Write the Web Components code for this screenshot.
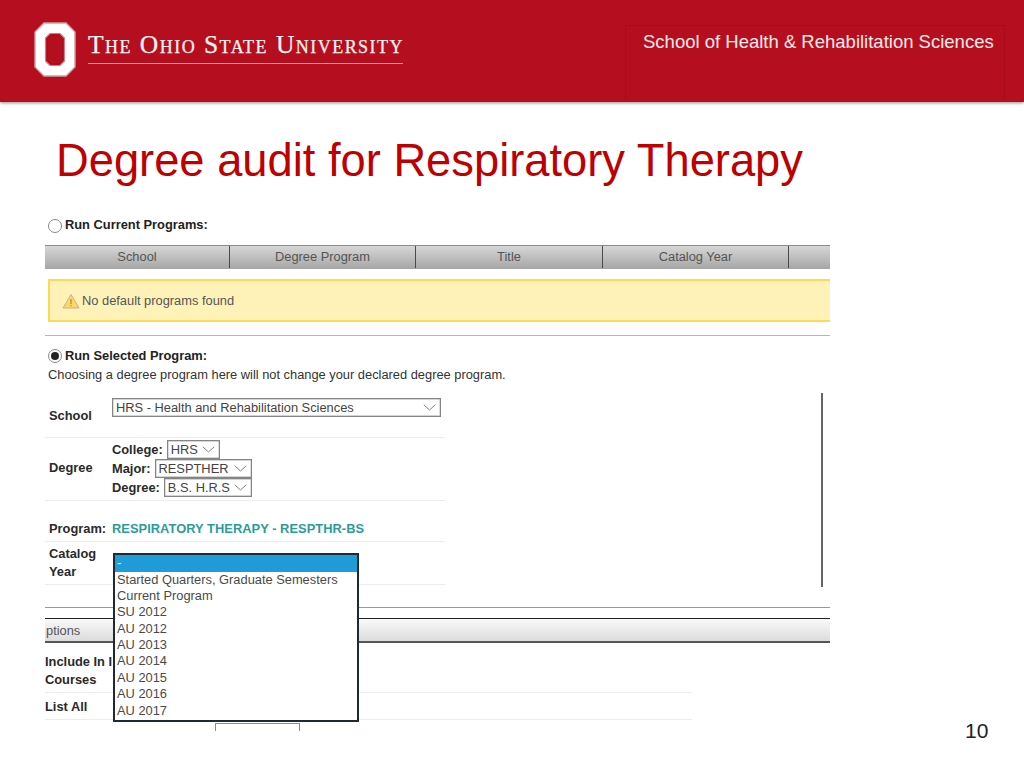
<!DOCTYPE html>
<html lang="en">
<head>
<meta charset="utf-8">
<title>Degree audit for Respiratory Therapy</title>
<style>
  html, body { margin: 0; background: #fff; }
  body { width: 1024px; height: 768px; overflow: hidden; position: relative; font-family: "Liberation Sans", Arial, sans-serif; }
  .page-no { position: absolute; left: 965px; top: 719px; font-size: 21px; line-height: 24px; color: #222; }
</style>
</head>
<body>
<slide-header school="School of Health &amp; Rehabilitation Sciences"></slide-header>
<slide-title>Degree audit for Respiratory Therapy</slide-title>
<audit-panel></audit-panel>
<div class="page-no">10</div>

<script>
const fontStack = '"Liberation Sans", Arial, sans-serif'

customElements.define('osu-logo',
  class extends HTMLElement {
    constructor () {
      super()
      this.attachShadow({ mode: 'open' }).innerHTML = `
        <style>:host { display: block; width: 42px; height: 55px; } svg { display: block; }</style>
        <svg width="42" height="55" viewBox="0 0 42 55">
          <path d="M10 1H32L41 10V45L32 54H10L1 45V10Z" fill="#fff" stroke="#cfa0a6" stroke-width="1.400"/>
          <path d="M16 11.500H26L30.500 16V39L26 43.500H16L11.500 39V16Z" fill="#b50f1f" stroke="#cf7d86" stroke-width="1.200"/>
          <path d="M17 13.500H25L28.500 17V38L25 41.500H17L13.500 38V17Z" fill="#b50f1f" stroke="#a80c1b" stroke-width=".8"/>
        </svg>`
    }
  }
)

customElements.define('slide-header',
  class extends HTMLElement {
    constructor () {
      super()
      this.attachShadow({ mode: 'open' }).innerHTML = `
        <style>
          :host { display: flex; height: 102px; background: #b50f1f; box-shadow: 0 1px 3px rgba(0,0,0,.45); box-sizing: border-box; padding: 22px 19px 0 34px; position: relative; }
          .mark { margin-left: 12px; width: 315px; height: 41px; border-bottom: 1px solid #e39aa1; }
          .mark span { display: block; padding-top: 10px; font: 500 25.500px/26px "Liberation Serif", serif; font-variant: small-caps; letter-spacing: 1.470px; -webkit-text-stroke: .25px #fdf3f3; color: #fdf3f3; white-space: nowrap; }
          .school { margin-left: auto; width: 380px; height: 75px; margin-top: 3px; box-sizing: border-box; border: 1px solid #a80c1b; border-bottom: 0; padding: 6px 0 0 17px; color: #fbeaea; font: 18.500px/20px ${fontStack}; white-space: nowrap; }
        </style>
        <osu-logo></osu-logo>
        <div class="mark"><span>The Ohio State University</span></div>
        <div class="school"></div>`
      this.shadowRoot.querySelector('.school').textContent = this.getAttribute('school')
    }
  }
)

customElements.define('slide-title',
  class extends HTMLElement {
    constructor () {
      super()
      this.attachShadow({ mode: 'open' }).innerHTML = `
        <style>:host { display: block; height: 113px; box-sizing: border-box; padding: 32px 0 0 56px; font: 45.300px/54px ${fontStack}; color: #bd0000; white-space: nowrap; }</style>
        <slot></slot>`
    }
  }
)

customElements.define('radio-label',
  class extends HTMLElement {
    constructor () {
      super()
      const on = this.hasAttribute('checked')
      this.attachShadow({ mode: 'open' }).innerHTML = `
        <style>
          :host { display: flex; align-items: center; height: 18px; padding-left: 3px; font: bold 12.850px/18px ${fontStack}; color: #222; }
          i { display: block; box-sizing: border-box; width: 14px; height: 14px; border: 1px solid #8a8a8a; border-radius: 50%; margin-right: 3px; background: #fff; position: relative; top: ${on ? 0 : 1}px; }
          i.on::after { content: ""; position: absolute; inset: 2px; border-radius: 50%; background: #222; }
        </style>
        <i class="${on ? 'on' : ''}"></i><slot></slot>`
    }
  }
)

customElements.define('grid-header',
  class extends HTMLElement {
    constructor () {
      super()
      this.attachShadow({ mode: 'open' }).innerHTML = `
        <style>
          :host { display: grid; grid-template-columns: 185px 186px 187px 186px 1fr; height: 24px; box-sizing: border-box; border-top: 1px solid #8c8c8c; background: linear-gradient(#d6d6d6, #a6a6a6); font: 12.850px/22px ${fontStack}; color: #555; }
          div { text-align: center; border-right: 1px solid #4a4a4a; margin-bottom: 1px; }
          div:last-child { border: 0; }
        </style>
        <div>School</div><div>Degree Program</div><div>Title</div><div>Catalog Year</div><div></div>`
    }
  }
)

customElements.define('warn-alert',
  class extends HTMLElement {
    constructor () {
      super()
      this.attachShadow({ mode: 'open' }).innerHTML = `
        <style>
          :host { display: flex; align-items: center; height: 43px; box-sizing: border-box; margin-left: 3px; border: 2px solid #ffd94f; border-right: 0; background: #fff2b8; padding: 0 0 0 12px; font: 12.850px/18px ${fontStack}; color: #555; }
          svg { margin-right: 2px; flex: none; }
        </style>
        <svg width="18" height="16" viewBox="0 0 18 16">
          <path d="M9 1.500L17 15H1Z" fill="#fbd66a" stroke="#c9b48a" stroke-width="1"/>
          <path d="M8.400 6H9.600V11H8.400ZM8.400 12H9.600V13.300H8.400Z" fill="#b98a2a"/>
        </svg>
        <slot></slot>`
    }
  }
)

customElements.define('fake-select',
  class extends HTMLElement {
    constructor () {
      super()
      this.attachShadow({ mode: 'open' }).innerHTML = `
        <style>
          :host { display: flex; align-items: center; justify-content: space-between; box-sizing: border-box; height: 19px; border: 1px solid #858585; box-shadow: 0 0 0 .4px #aaa inset; padding: 0 4px 0 3px; font: 12.850px/17px ${fontStack}; color: #444; background: #fff; white-space: nowrap; }
          svg { flex: none; display: block; }
        </style>
        <slot></slot>
        <svg width="13" height="7" viewBox="0 0 13 7"><path d="M.8.800L6.500 6L12.200.800" fill="none" stroke="#808080" stroke-width="1"/></svg>`
      this.style.width = this.getAttribute('width') + 'px'
    }
  }
)

customElements.define('form-row',
  class extends HTMLElement {
    constructor () {
      super()
      this.attachShadow({ mode: 'open' }).innerHTML = `
        <style>
          :host { display: grid; grid-template-columns: 67px 1fr; box-sizing: border-box; border-bottom: 1px solid #ececec; font: bold 12.850px/18px ${fontStack}; color: #2a2a2a; }
          .label { padding-left: 4px; }
        </style>
        <div class="label"><slot name="label"></slot></div>
        <div><slot></slot></div>`
    }
  }
)

customElements.define('year-listbox',
  class extends HTMLElement {
    constructor () {
      super()
      const items = ['Started Quarters, Graduate Semesters', 'Current Program', 'SU 2012', 'AU 2012', 'AU 2013', 'AU 2014', 'AU 2015', 'AU 2016', 'AU 2017']
      this.attachShadow({ mode: 'open' }).innerHTML = `
        <style>
          :host { display: block; position: absolute; left: 68px; top: 338px; width: 246px; height: 169px; box-sizing: border-box; border: 2px solid #1d2a33; background: #fff; font: 12.850px/16.400px ${fontStack}; color: #4a4a4a; white-space: nowrap; }
          div { padding-left: 2px; height: 16.400px; }
          .sel { height: 16.500px; line-height: 16px; background: #1f9cd8; color: #fff; }
        </style>
        <div class="sel">-</div>
        ${items.map(item => `<div>${item}</div>`).join('')}`
    }
  }
)

customElements.define('audit-panel',
  class extends HTMLElement {
    constructor () {
      super()
      this.attachShadow({ mode: 'open' }).innerHTML = `
        <style>
          :host { display: block; position: relative; width: 785px; height: 553px; margin-left: 45px; overflow: hidden; font: 12.850px/18px ${fontStack}; color: #333; }
          .run-current { padding-top: 1px; height: 29px; box-sizing: border-box; margin-bottom: 1px; }
          grid-header { margin-bottom: 10px; }
          .teal { height: 1px; background: #7fccd4; margin: 13px 0 11px; }
          .help { padding-left: 3px; height: 18px; line-height: 19px; white-space: nowrap; }
          .form { width: 400px; }
          .school-row { height: 55px; }
          .school-row [slot=label] { padding-top: 24px; }
          .school-row fake-select { margin-top: 15px; }
          .degree-row { height: 63px; padding-top: 2px; }
          .degree-row [slot=label] { padding-top: 19px; }
          .pick { display: flex; align-items: center; height: 19px; gap: 4px; white-space: nowrap; }
          .program-row { height: 41px; padding-top: 19px; }
          .prog { color: #2a9d96; letter-spacing: .05px; white-space: nowrap; }
          .catalog-row { height: 43px; padding-top: 3px; }
          .gray-rule { height: 1px; background: #9a9a9a; margin-top: 22px; }
          .bar { margin-top: 10px; height: 25px; box-sizing: border-box; border-top: 1px solid #222; border-bottom: 2px solid #555; background: linear-gradient(#f9f9f9, #dcdcdc); padding-left: 1px; line-height: 24px; color: #555; }
          .wide { width: 647px; }
          .include-row { height: 50px; padding-top: 7px; }
          .list-row { height: 27px; padding-top: 2px; }
          .stub { width: 85px; height: 8px; margin: 3px 0 0 170px; box-sizing: border-box; border: 1px solid #8a8a8a; border-bottom: 0; }
          .scroll { position: absolute; left: 776px; top: 178px; width: 2px; height: 194px; background: #666; }
        </style>
        <div class="run-current"><radio-label>Run Current Programs:</radio-label></div>
        <grid-header></grid-header>
        <warn-alert>No default programs found</warn-alert>
        <div class="teal"></div>
        <radio-label checked>Run Selected Program:</radio-label>
        <div class="help">Choosing a degree program here will not change your declared degree program.</div>
        <div class="form">
          <form-row class="school-row">
            <div slot="label">School</div>
            <fake-select width="329">HRS - Health and Rehabilitation Sciences</fake-select>
          </form-row>
          <form-row class="degree-row">
            <div slot="label">Degree</div>
            <div class="pick">College: <fake-select width="53">HRS</fake-select></div>
            <div class="pick">Major: <fake-select width="97">RESPTHER</fake-select></div>
            <div class="pick">Degree: <fake-select width="88">B.S. H.R.S</fake-select></div>
          </form-row>
          <form-row class="program-row">
            <div slot="label">Program:</div>
            <div class="prog">RESPIRATORY THERAPY - RESPTHR-BS</div>
          </form-row>
          <form-row class="catalog-row">
            <div slot="label">Catalog<br>Year</div>
          </form-row>
        </div>
        <div class="gray-rule"></div>
        <div class="bar">ptions</div>
        <form-row class="wide include-row" style="grid-template-columns: 1fr">
          <div>Include In I<br>Courses</div>
        </form-row>
        <form-row class="wide list-row" style="grid-template-columns: 1fr">
          <div>List All</div>
        </form-row>
        <div class="stub"></div>
        <div class="scroll"></div>
        <year-listbox></year-listbox>`
    }
  }
)
</script>
</body>
</html>
